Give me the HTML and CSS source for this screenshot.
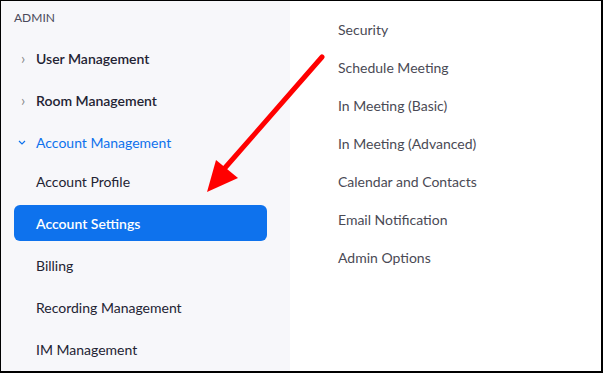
FILE: index.html
```
<!DOCTYPE html>
<html lang="en">
<head>
    <meta charset="UTF-8">
    <title>Account Settings</title>
    <link rel="stylesheet" href="styles.css">
</head>
<body>
    <div class="frame">
        <div class="sidebar">
            <div class="section-title">ADMIN</div>
            <div class="nav-item">
                <span class="chevron">&rsaquo;</span>User Management
            </div>
            <div class="nav-item">
                <span class="chevron">&rsaquo;</span>Room Management
            </div>
            <div class="nav-item open">
                <svg class="chevron-down" viewBox="0 0 8 5" width="8" height="5">
                    <polyline points="1 1 4 4 7 1" fill="none" stroke="currentColor" stroke-width="1.2"/>
                </svg>Account Management
            </div>
            <div class="sub-list">
                <div class="sub-item">Account Profile</div>
                <div class="sub-item active">Account Settings</div>
                <div class="sub-item">Billing</div>
                <div class="sub-item">Recording Management</div>
                <div class="sub-item">IM Management</div>
            </div>
        </div>

        <div class="content">
            <div class="tab">Security</div>
            <div class="tab">Schedule Meeting</div>
            <div class="tab">In Meeting (Basic)</div>
            <div class="tab">In Meeting (Advanced)</div>
            <div class="tab">Calendar and Contacts</div>
            <div class="tab">Email Notification</div>
            <div class="tab">Admin Options</div>
        </div>

        <!-- annotation arrow -->
        <svg class="arrow" width="603" height="373" viewBox="0 0 603 373">
            <line x1="322" y1="57" x2="224" y2="169" stroke="#ff0000" stroke-width="5" stroke-linecap="round"/>
            <polygon points="207,192 216,160 238,178" fill="#ff0000"/>
        </svg>
    </div>
</body>
</html>
```

FILE: styles.css
```
body {
    margin: 0;
    font-family: Lato, "Open Sans", sans-serif;
    background: #fff;
}
.frame {
    position: relative;
    width: 603px;
    height: 373px;
    box-sizing: border-box;
    border-top: 1px solid #000;
    border-left: 1px solid #000;
    border-right: 2px solid #000;
    border-bottom: 2px solid #000;
    display: flex;
    overflow: hidden;
}
.sidebar {
    width: 289px;
    background-color: #f7f7fa;
    flex-shrink: 0;
}
.section-title {
    height: 36px;
    box-sizing: border-box;
    padding: 9px 0 0 13px;
    font-size: 12px;
    line-height: 16px;
    color: #4a4a5a;
}
.nav-item {
    height: 42px;
    display: flex;
    align-items: center;
    padding-left: 35px;
    position: relative;
    font-size: 14px;
    font-weight: 600;
    color: #232333;
}
.chevron {
    position: absolute;
    left: 20px;
    font-size: 15px;
    font-weight: 400;
    color: #888;
}
.nav-item.open {
    color: #0e72ed;
    font-weight: 400;
}
.chevron-down {
    position: absolute;
    left: 17px;
    top: 19px;
    color: #0e72ed;
}
.sub-list {
    display: flex;
    flex-direction: column;
    gap: 6px;
}
.sub-item {
    height: 36px;
    display: flex;
    align-items: center;
    margin: 0 23px 0 13px;
    padding-left: 22px;
    border-radius: 6px;
    font-size: 14px;
    color: #232333;
}
.sub-item.active {
    background-color: #0e72ed;
    color: #fff;
    font-weight: 600;
}
.content {
    flex: 1;
    padding: 9px 0 0 48px;
}
.tab {
    height: 38px;
    display: flex;
    align-items: center;
    font-size: 14px;
    color: #4a4a55;
}
.arrow {
    position: absolute;
    left: -1px;
    top: -1px;
    pointer-events: none;
}
```
